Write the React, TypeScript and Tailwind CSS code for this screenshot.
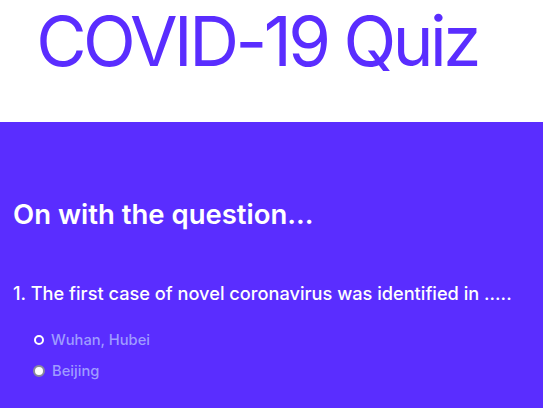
import React from 'react';

const options = ['Wuhan, Hubei', 'Beijing'];

const App: React.FC = () => {
  return (
    <div className="min-h-screen bg-white font-['Inter',sans-serif]">
      <header className="h-[122px] flex justify-center pr-[29px]">
        <h1 className="text-[69px] leading-[80px] text-[#5a2dff] font-normal tracking-[-3.5px] pt-[1px]">COVID-19 Quiz</h1>
      </header>

      <main className="bg-[#5a2dff] min-h-[286px] px-[13px] pt-[74px] pb-6">
        <h2 className="text-[27.5px] font-semibold text-white leading-[36px]">On with the question...</h2>

        <div className="mt-[49px]">
          <p className="text-[18.2px] text-white font-medium leading-[24px]">
            1. The first case of novel coronavirus was identified in .....
          </p>
          <ul className="mt-[24px] pl-[21px] flex flex-col gap-[9px]">
            {options.map((opt, idx) => (
              <li key={opt} className="flex items-center gap-[7px] text-[14.7px] font-medium leading-[22px] text-[#9f9cff]">
                {idx === 0 ? (
                  <span className="w-[10px] h-[10px] rounded-full border-[2px] border-white bg-[#5a2dff]" />
                ) : (
                  <span className="w-[12px] h-[12px] rounded-full border-[2px] border-[#8a8a9a] bg-white -ml-[1px]" />
                )}
                {opt}
              </li>
            ))}
          </ul>
        </div>
      </main>
    </div>
  );
};

export default App;
